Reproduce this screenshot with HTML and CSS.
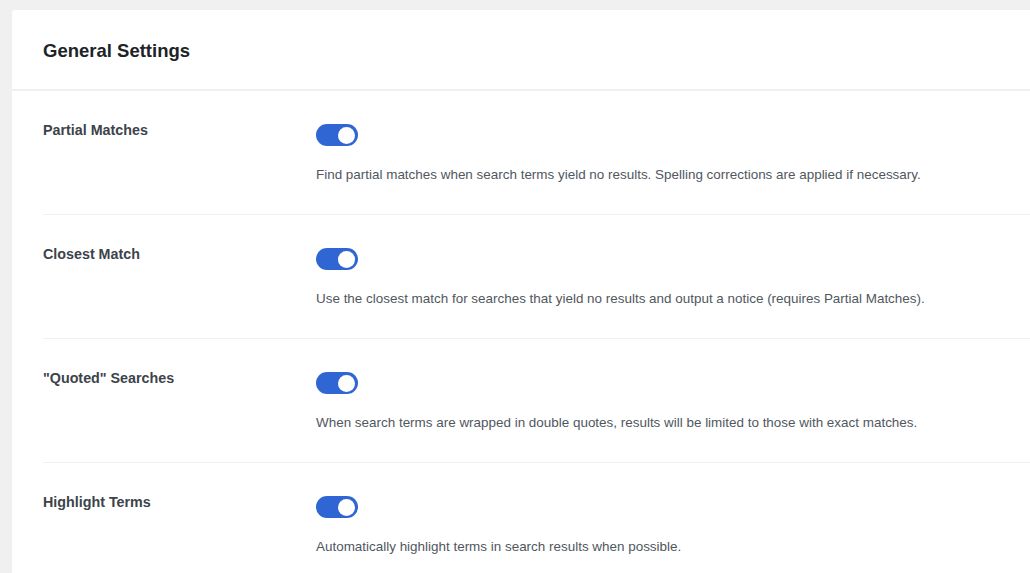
FILE: index.html
```html
<!DOCTYPE html>
<html lang="en">
<head>
<meta charset="utf-8">
<title>General Settings</title>
<link rel="stylesheet" href="styles.css">
</head>
<body>
<div class="card">
  <div class="card-header">
    <h2 class="card-title">General Settings</h2>
  </div>
  <div class="rows">
    <div class="row">
      <div class="label">Partial Matches</div>
      <div class="control">
        <span class="toggle on"><span class="knob"></span></span>
        <p class="desc">Find partial matches when search terms yield no results. Spelling corrections are applied if necessary.</p>
      </div>
    </div>
    <div class="row">
      <div class="label">Closest Match</div>
      <div class="control">
        <span class="toggle on"><span class="knob"></span></span>
        <p class="desc">Use the closest match for searches that yield no results and output a notice (requires Partial Matches).</p>
      </div>
    </div>
    <div class="row">
      <div class="label">"Quoted" Searches</div>
      <div class="control">
        <span class="toggle on"><span class="knob"></span></span>
        <p class="desc">When search terms are wrapped in double quotes, results will be limited to those with exact matches.</p>
      </div>
    </div>
    <div class="row">
      <div class="label">Highlight Terms</div>
      <div class="control">
        <span class="toggle on"><span class="knob"></span></span>
        <p class="desc">Automatically highlight terms in search results when possible.</p>
      </div>
    </div>
  </div>
</div>
</body>
</html>
```
FILE: styles.css
```css
html, body {
  margin: 0;
  padding: 0;
  background: #f0f0f1;
  overflow: hidden;
  font-family: "Liberation Sans", Arial, sans-serif;
}
body {
  padding: 10px 0 0 12px;
  height: 573px;
  box-sizing: border-box;
}
.card {
  background: #fff;
  border-radius: 3px;
  width: 1100px;
  min-height: 700px;
}
.card-header {
  height: 81px;
  border-bottom: 2px solid #f0f0f1;
  display: flex;
  align-items: center;
  padding-left: 31px;
  padding-top: 3px;
  box-sizing: border-box;
}
.card-title {
  margin: 0;
  font-size: 18.5px;
  line-height: 24px;
  font-weight: bold;
  color: #1d2327;
}
.rows {
  padding-left: 31px;
}
.row {
  display: flex;
  padding: 30px 0 30px;
  border-bottom: 1px solid #f0f0f1;
}
.label {
  width: 273px;
  flex: none;
  font-size: 14.3px;
  line-height: 18px;
  font-weight: bold;
  color: #3c434a;
}
.control {
  display: flex;
  flex-direction: column;
  align-items: flex-start;
}
.toggle {
  display: block;
  width: 42px;
  height: 22px;
  margin-top: 3px;
  border-radius: 11px;
  background: #2f66d3;
  position: relative;
  box-sizing: border-box;
}
.toggle .knob {
  position: absolute;
  top: 2.5px;
  right: 3px;
  width: 17px;
  height: 17px;
  border-radius: 50%;
  background: #fff;
}
.desc {
  margin: 20px 0 0;
  font-size: 13.45px;
  line-height: 18px;
  color: #50575e;
}
```
